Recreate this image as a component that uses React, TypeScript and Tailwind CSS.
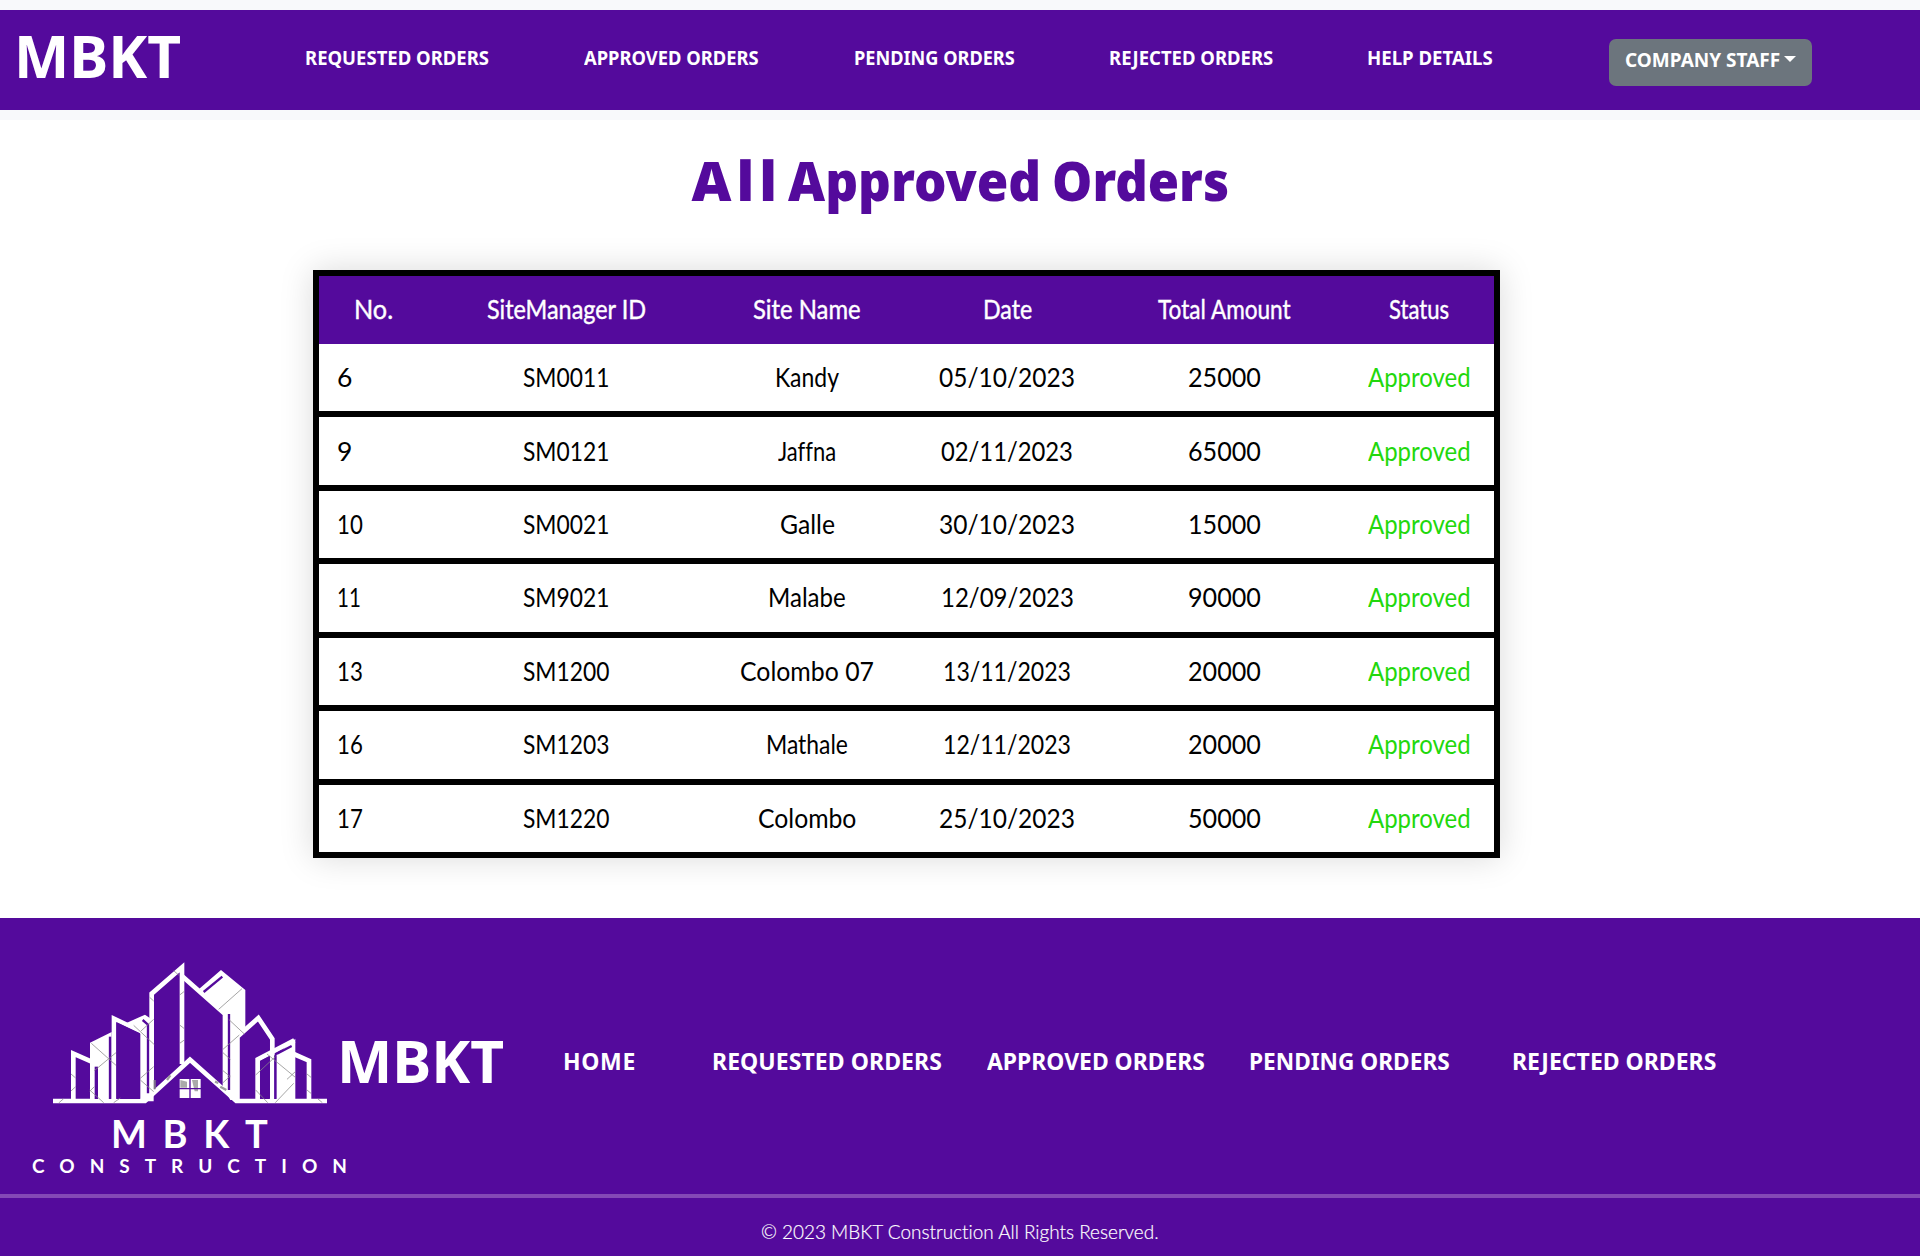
import { useLayoutEffect, useRef, useState } from "react";

/** Fills the given width: short lines are tracked out, long ones are condensed. */
function FitText({ text, width, className = "" }: { text: string; width: number; className?: string }) {
  const ref = useRef<HTMLSpanElement>(null);
  const [fit, setFit] = useState({ spacing: 0, scale: 1 });
  useLayoutEffect(() => {
    const el = ref.current;
    if (!el) return;
    const natural = el.offsetWidth;
    setFit(
      natural > width
        ? { spacing: 0, scale: width / natural }
        : { spacing: (width - natural) / Math.max(1, text.length - 1), scale: 1 },
    );
  }, [text, width]);
  return (
    <span className={`inline-block whitespace-nowrap text-left ${className}`} style={{ width }}>
      <span
        ref={ref}
        className="inline-block origin-left [font-variant-ligatures:none]"
        style={{ letterSpacing: fit.spacing, transform: `scaleX(${fit.scale})` }}
      >
        {text}
      </span>
    </span>
  );
}

const navLinks = [
  { text: "REQUESTED ORDERS", width: 184, gap: "ml-[124px]" },
  { text: "APPROVED ORDERS", width: 175, gap: "ml-[95px]" },
  { text: "PENDING ORDERS", width: 161, gap: "ml-[95px]" },
  { text: "REJECTED ORDERS", width: 164, gap: "ml-[94px]" },
  { text: "HELP DETAILS", width: 126, gap: "ml-[94px]" },
];

const footerLinks = [
  { text: "HOME", width: 72, gap: "ml-[59px]" },
  { text: "REQUESTED ORDERS", width: 230, gap: "ml-[77px]" },
  { text: "APPROVED ORDERS", width: 218, gap: "ml-[45px]" },
  { text: "PENDING ORDERS", width: 201, gap: "ml-[44px]" },
  { text: "REJECTED ORDERS", width: 204, gap: "ml-[62px]" },
];

const headers = [
  { text: "No.", width: 39 },
  { text: "SiteManager ID", width: 159 },
  { text: "Site Name", width: 108 },
  { text: "Date", width: 49 },
  { text: "Total Amount", width: 133 },
  { text: "Status", width: 60 },
];

const orders = [
  { no: "6", noW: 15, id: "SM0011", site: "Kandy", siteW: 64, date: "05/10/2023", dateW: 136, total: "25000" },
  { no: "9", noW: 15, id: "SM0121", site: "Jaffna", siteW: 58, date: "02/11/2023", dateW: 132, total: "65000" },
  { no: "10", noW: 26, id: "SM0021", site: "Galle", siteW: 55, date: "30/10/2023", dateW: 136, total: "15000" },
  { no: "11", noW: 24, id: "SM9021", site: "Malabe", siteW: 78, date: "12/09/2023", dateW: 133, total: "90000" },
  { no: "13", noW: 26, id: "SM1200", site: "Colombo 07", siteW: 134, date: "13/11/2023", dateW: 128, total: "20000" },
  { no: "16", noW: 26, id: "SM1203", site: "Mathale", siteW: 82, date: "12/11/2023", dateW: 128, total: "20000" },
  { no: "17", noW: 26, id: "SM1220", site: "Colombo", siteW: 98, date: "25/10/2023", dateW: 136, total: "50000" },
];

const columns = "grid grid-cols-[109px_276px_206px_194px_240px_150px] items-center text-center";

function Skyline() {
  return (
    <svg viewBox="95 180 830 435" className="ml-[31.67px] block h-[145px] w-[276.67px]">
      <g fill="#fff">
        <path d="M209 428 L274 396 V600 H209 Z" />
        <path d="M320 368 L374 344 L400 362 V604 H360 V396 Z" />
        <path d="M537 266 L602 210 L675 270 V386 L657 404 V600 H630 L608 560 V342 Z" />
        <path d="M768 466 L825 416 V604 H768 Z" />
      </g>
      <g fill="none" stroke="#fff" strokeWidth="14" strokeLinejoin="miter">
        <path d="M159 600 V461 L212 484" />
        <path d="M216 600 V488" />
        <path d="M281 600 V356 L365 396" />
        <path d="M394 570 V281 L485 202 V492" />
        <path d="M485 228 L614 342 V570" />
        <path d="M651 600 V410 L714 354 L756 417 V600" />
        <path d="M712 600 V478 L822 421" />
        <path d="M820 462 L866 482 V600" />
        <path d="M98 603 H374 L509 479 L648 603 H920" />
      </g>
      <g fill="none" stroke="#540a9c" strokeWidth="7">
        <path d="M269 410 V597" />
        <path d="M367 360 L383 374 V580" />
        <path d="M550 276 L606 230" />
        <path d="M626 342 V570" />
        <path d="M765 466 V597" />
        <path d="M770 461 L814 438" />
      </g>
      <g fill="#540a9c">
        <path d="M223 500 H233 V597 H223 Z" />
        <path d="M288 366 L359 400 V597 H288 Z" />
        <path d="M719 484 L748 468 V597 H719 Z" />
      </g>
      <g fill="none" stroke="#888" strokeWidth="3" opacity=".75">
        <path d="M213 430 L287 496 M287 458 L222 512 M152 522 L166 534 M166 560 L152 573" />
        <path d="M340 376 L402 434 M400 358 L362 393 M400 500 L360 535 M360 540 L400 575" />
        <path d="M388 292 L400 303 M460 212 L476 226 M478 285 L492 274 M478 375 L492 386 M478 430 L492 420" />
        <path d="M665 266 L595 328 M625 358 L672 402 M657 405 L608 448 M608 458 L630 478 M608 548 L630 528 M608 512 L630 530" />
        <path d="M740 462 L825 532 M825 515 L800 538 M765 470 L706 525 M706 570 L742 608 M820 550 L765 608 M860 522 L872 532 M860 570 L872 580 M892 596 L906 608" />
        <path d="M115 609 L130 596 M208 570 L250 608 M222 560 L208 574 M280 608 L300 594" />
      </g>
      <g stroke="#888" strokeWidth="7" opacity=".8">
        <path d="M403 540 V568 M440 540 L450 526 M584 545 L594 549 M600 560 L618 570" />
      </g>
      <path fill="#fff" d="M478 537 H541 V594 H478 Z" />
      <path fill="#aaa" d="M480 540 L500 545 V563 H480 Z M515 540 H533 V574 H523 Z" />
      <path stroke="#540a9c" strokeWidth="4" d="M509 535 V596 M476 566 H543" />
    </svg>
  );
}

export default function App() {
  return (
    <div className="flex h-[1256px] w-full flex-col overflow-hidden bg-white font-['Noto_Sans',sans-serif]">
      <header className="h-[120px] shrink-0 bg-[#f8f9fb] py-[10px]">
        <nav className="flex h-[100px] items-start bg-[#540a9c] font-bold text-white">
          <FitText text="MBKT" width={167} className="ml-[14px] mt-[5px] text-[59px] leading-[80px]" />
          {navLinks.map((l) => (
            <FitText key={l.text} text={l.text} width={l.width} className={`mt-[34px] text-[19.5px] leading-[28px] ${l.gap}`} />
          ))}
          <button className="ml-[116px] mt-[29px] flex h-[47px] w-[203px] items-start rounded-[7px] bg-[#6c757d] pl-[16px] pt-[7px]">
            <FitText text="COMPANY STAFF" width={155} className="text-[19.5px] leading-[28px]" />
            <span className="ml-[4px] mt-[10px] border-x-[6px] border-t-[6px] border-x-transparent border-t-white" />
          </button>
        </nav>
      </header>

      <main className="h-[798px] shrink-0">
        <h1 className="flex h-[150px] justify-center gap-[11px] pt-[22px] text-[55px] font-black leading-[76px] text-[#540a9c]">
          <FitText text="All" width={85} />
          <FitText text="Approved" width={253} />
          <FitText text="Orders" width={177} />
        </h1>
        <div className="ml-[313px] h-[588px] w-[1187px] border-[6px] border-b-0 border-black bg-white font-['Lato',sans-serif] text-[26.5px] leading-[38px] text-black shadow-[0_0_32px_rgba(0,0,0,0.15)]">
          <div className={`${columns} h-[68px] bg-[#540a9c] pb-[2px] text-white [-webkit-text-stroke:0.4px_white]`}>
            {headers.map((h) => (
              <div key={h.text}>
                <FitText text={h.text} width={h.width} />
              </div>
            ))}
          </div>
          {orders.map((o) => (
            <div key={o.no} className={`${columns} h-[73.43px] border-b-[6px] border-black pb-[1px]`}>
              <div className="pl-[18px] text-left">
                <FitText text={o.no} width={o.noW} />
              </div>
              <div>
                <FitText text={o.id} width={86} />
              </div>
              <div>
                <FitText text={o.site} width={o.siteW} />
              </div>
              <div>
                <FitText text={o.date} width={o.dateW} />
              </div>
              <div>
                <FitText text={o.total} width={73} />
              </div>
              <div className="text-[#22d80c]">
                <FitText text="Approved" width={103} />
              </div>
            </div>
          ))}
        </div>
      </main>

      <footer className="flex h-[338px] shrink-0 flex-col bg-[#540a9c] text-white">
        <div className="flex h-[276px] items-start font-bold">
          <div className="w-[336px] pt-[42px] pl-[20px]">
            <Skyline />
            <div className="flex h-[42px] pl-[91px] pt-[8px] font-['Lato',sans-serif] font-bold">
              <FitText text="MBKT" width={157} className="text-[38px] leading-[40px]" />
            </div>
            <div className="pl-[12px] font-['Lato',sans-serif] font-bold">
              <FitText text="CONSTRUCTION" width={315} className="text-[19px] leading-[38px]" />
            </div>
          </div>
          <FitText text="MBKT" width={167} className="ml-[1px] mt-[102px] text-[59px] leading-[80px]" />
          {footerLinks.map((l) => (
            <FitText key={l.text} text={l.text} width={l.width} className={`mt-[127px] text-[23px] leading-[32px] ${l.gap}`} />
          ))}
        </div>
        <div className="h-[4px] bg-[#8448b6]" />
        <p className="pt-[17px] text-center font-['Lato',sans-serif] text-[20.5px] font-light leading-[32px]">
          <FitText text="© 2023 MBKT Construction All Rights Reserved." width={398} className="[-webkit-text-stroke:0.2px_white]" />
        </p>
      </footer>
    </div>
  );
}
